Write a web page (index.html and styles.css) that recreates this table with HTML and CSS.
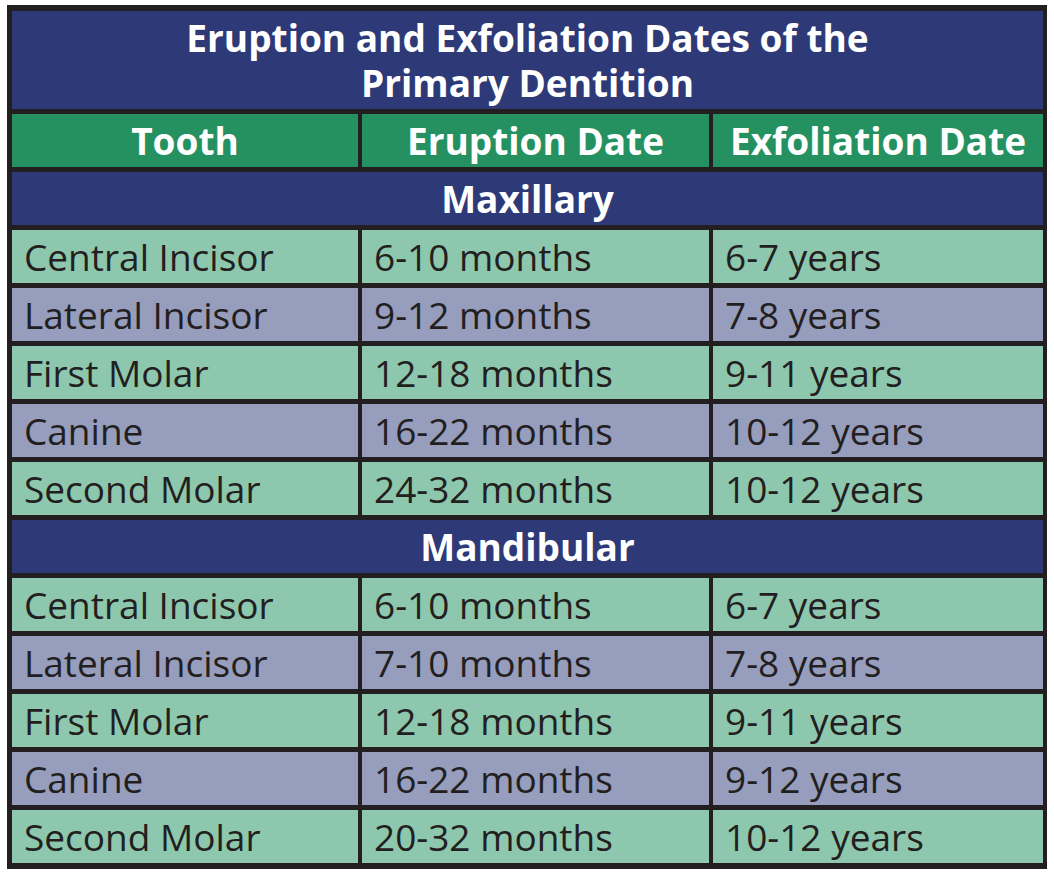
FILE: index.html
```html
<!DOCTYPE html>
<html>
<head>
<meta charset="utf-8">
<link rel="stylesheet" href="styles.css">
</head>
<body>
<div class="table">
  <div class="title span">Eruption and Exfoliation Dates of the<br>Primary Dentition</div>
  <div class="head">Tooth</div>
  <div class="head">Eruption Date</div>
  <div class="head">Exfoliation Date</div>

  <div class="section span">Maxillary</div>
  <div class="cell g">Central Incisor</div><div class="cell g">6-10 months</div><div class="cell g">6-7 years</div>
  <div class="cell p">Lateral Incisor</div><div class="cell p">9-12 months</div><div class="cell p">7-8 years</div>
  <div class="cell g">First Molar</div><div class="cell g">12-18 months</div><div class="cell g">9-11 years</div>
  <div class="cell p">Canine</div><div class="cell p">16-22 months</div><div class="cell p">10-12 years</div>
  <div class="cell g">Second Molar</div><div class="cell g">24-32 months</div><div class="cell g">10-12 years</div>

  <div class="section span">Mandibular</div>
  <div class="cell g">Central Incisor</div><div class="cell g">6-10 months</div><div class="cell g">6-7 years</div>
  <div class="cell p">Lateral Incisor</div><div class="cell p">7-10 months</div><div class="cell p">7-8 years</div>
  <div class="cell g">First Molar</div><div class="cell g">12-18 months</div><div class="cell g">9-11 years</div>
  <div class="cell p">Canine</div><div class="cell p">16-22 months</div><div class="cell p">9-12 years</div>
  <div class="cell g">Second Molar</div><div class="cell g">20-32 months</div><div class="cell g">10-12 years</div>
</div>
</body>
</html>
```

FILE: styles.css
```css
html, body {
  margin: 0;
  padding: 0;
  background: #ffffff;
}

body {
  font-family: "Open Sans", "Noto Sans", sans-serif;
}

.table {
  margin: 5px 0 0 7px;
  width: 1031px;
  padding: 6px 4px 6px 5px;
  background: #231f20;
  display: grid;
  grid-template-columns: 346px 347px 330px;
  grid-template-rows: 98px;
  grid-auto-rows: 53px;
  column-gap: 4px;
  row-gap: 5px;
}

.span {
  grid-column: 1 / -1;
}

.title {
  background: #2e3a77;
  color: #ffffff;
  font-weight: 700;
  font-size: 37px;
  line-height: 45px;
  text-align: center;
  display: flex;
  align-items: center;
  justify-content: center;
}

.head {
  background: #259161;
  color: #ffffff;
  font-weight: 700;
  font-size: 37px;
  display: flex;
  align-items: center;
  justify-content: center;
}

.section {
  background: #2e3a77;
  color: #ffffff;
  font-weight: 700;
  font-size: 37px;
  display: flex;
  align-items: center;
  justify-content: center;
}

.cell {
  color: #231f20;
  font-size: 37px;
  display: flex;
  align-items: center;
  padding-left: 12px;
}

.g {
  background: #8dc8ae;
}

.p {
  background: #969dbd;
}
```
